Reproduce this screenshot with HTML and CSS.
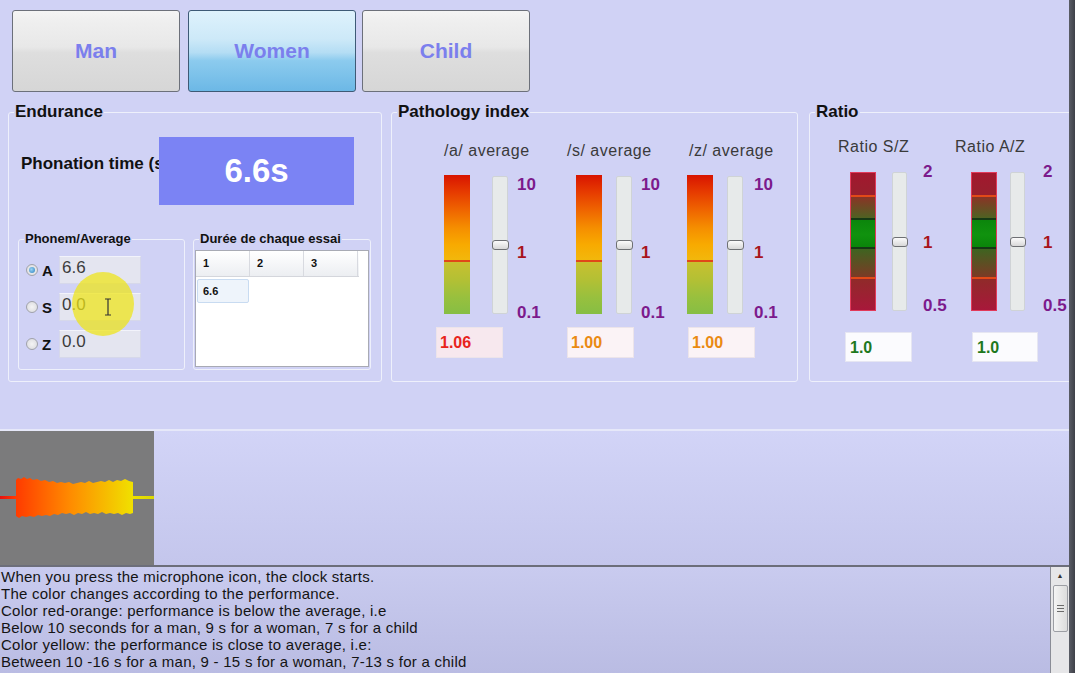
FILE: index.html
```html
<!DOCTYPE html>
<html lang="en">
<head>
<meta charset="utf-8">
<title>Endurance</title>
<link rel="stylesheet" href="styles.css">
</head>
<body>
<div class="window">
  <main class="main">
    <div class="toolbar">
      <button class="tab">Man</button>
      <button class="tab tab--active">Women</button>
      <button class="tab">Child</button>
    </div>

    <div class="groups">
      <fieldset class="group group--endurance">
        <legend>Endurance</legend>
        <div class="phonation">
          <div class="phonation-label">Phonation time (s)</div>
          <div class="phonation-value">6.6s</div>
        </div>
        <div class="subgroups">
          <fieldset class="subgroup subgroup--phonem">
            <legend>Phonem/Average</legend>
            <div class="phonem-row"><span class="radio radio--on"></span><span class="phonem-letter">A</span><span class="phonem-input">6.6</span></div>
            <div class="phonem-row"><span class="radio"></span><span class="phonem-letter">S</span><span class="phonem-input">0.0</span></div>
            <div class="phonem-row"><span class="radio"></span><span class="phonem-letter">Z</span><span class="phonem-input">0.0</span></div>
            <div class="cursor-spot"></div>
            <svg class="ibeam" width="8" height="18" viewBox="0 0 8 18"><path d="M1 1h6M4 1v16M1 17h6" stroke="#333" stroke-width="1.2" fill="none"/></svg>
          </fieldset>
          <fieldset class="subgroup subgroup--trials">
            <legend>Durée de chaque essai</legend>
            <div class="trials-grid">
              <div class="trials-head"><span>1</span><span>2</span><span>3</span></div>
              <div class="trials-row"><span class="trials-cell">6.6</span></div>
            </div>
          </fieldset>
        </div>
      </fieldset>

      <fieldset class="group group--pathology">
        <legend>Pathology index</legend>
        <div class="meters meters--pathology">
          <div class="mcol mcol--pa">
            <div class="mcol-title">/a/ average</div>
            <div class="meter">
              <div class="bar bar--path"></div>
              <div class="track"><span class="thumb"></span></div>
              <div class="scale"><span class="scale-max">10</span><span class="scale-mid">1</span><span class="scale-min">0.1</span></div>
            </div>
            <div class="value value--red">1.06</div>
          </div>
          <div class="mcol mcol--ps">
            <div class="mcol-title">/s/ average</div>
            <div class="meter">
              <div class="bar bar--path"></div>
              <div class="track"><span class="thumb"></span></div>
              <div class="scale"><span class="scale-max">10</span><span class="scale-mid">1</span><span class="scale-min">0.1</span></div>
            </div>
            <div class="value value--orange">1.00</div>
          </div>
          <div class="mcol mcol--pz">
            <div class="mcol-title">/z/ average</div>
            <div class="meter">
              <div class="bar bar--path"></div>
              <div class="track"><span class="thumb"></span></div>
              <div class="scale"><span class="scale-max">10</span><span class="scale-mid">1</span><span class="scale-min">0.1</span></div>
            </div>
            <div class="value value--orange">1.00</div>
          </div>
        </div>
      </fieldset>

      <fieldset class="group group--ratio">
        <legend>Ratio</legend>
        <div class="meters meters--ratio">
          <div class="mcol mcol--rsz">
            <div class="mcol-title">Ratio S/Z</div>
            <div class="meter">
              <div class="bar bar--ratio"></div>
              <div class="track"><span class="thumb"></span></div>
              <div class="scale"><span class="scale-max">2</span><span class="scale-mid">1</span><span class="scale-min">0.5</span></div>
            </div>
            <div class="value value--green">1.0</div>
          </div>
          <div class="mcol mcol--raz">
            <div class="mcol-title">Ratio A/Z</div>
            <div class="meter">
              <div class="bar bar--ratio"></div>
              <div class="track"><span class="thumb"></span></div>
              <div class="scale"><span class="scale-max">2</span><span class="scale-mid">1</span><span class="scale-min">0.5</span></div>
            </div>
            <div class="value value--green">1.0</div>
          </div>
        </div>
      </fieldset>
    </div>

    <div class="wave-row">
      <div class="wave">
        <svg width="154" height="134" viewBox="0 0 154 134">
          <defs>
            <linearGradient id="wg" x1="0" y1="0" x2="1" y2="0">
              <stop offset="0" stop-color="#e81010"/>
              <stop offset="0.1" stop-color="#ff3a00"/>
              <stop offset="0.45" stop-color="#ff8a00"/>
              <stop offset="0.86" stop-color="#f0e000"/>
              <stop offset="1" stop-color="#d8d800"/>
            </linearGradient>
          </defs>
          <path fill="url(#wg)" d="M0 65 L16 65 L16 49 L18 47 L21 48 L24 46 L27 48 L30 47 L33 49 L37 48 L41 50 L45 49 L49 51 L53 50 L57 52 L61 51 L65 52 L69 51 L73 53 L77 52 L81 51 L85 52 L89 50 L93 52 L97 51 L101 50 L105 51 L109 49 L113 51 L117 49 L121 50 L125 48 L129 50 L133 51 L133 65 L154 65 L154 68 L133 68 L133 82 L130 83 L126 82 L122 84 L118 82 L114 83 L110 82 L106 83 L102 81 L98 83 L94 82 L90 83 L86 81 L82 83 L78 82 L74 84 L70 82 L66 83 L62 82 L58 84 L54 83 L50 85 L46 84 L42 85 L38 84 L34 86 L30 85 L26 86 L22 85 L19 87 L16 85 L16 68 L0 68 Z"/>
        </svg>
      </div>
      <div class="wave-rest"></div>
    </div>

    <div class="log">
      <div class="log-text">
        <p>When you press the microphone icon, the clock starts.</p>
        <p>The color changes according to the performance.</p>
        <p>Color red-orange: performance is below the average, i.e</p>
        <p>Below 10 seconds for a man, 9 s for a woman, 7 s for a child</p>
        <p>Color yellow: the performance is close to average, i.e:</p>
        <p>Between 10 -16 s for a man, 9 - 15 s for a woman, 7-13 s for a child</p>
      </div>
      <div class="scrollbar">
        <div class="scroll-up">&#9650;</div>
        <div class="scroll-thumb"><span></span><span></span><span></span></div>
      </div>
    </div>
  </main>
  <div class="edge"></div>
</div>
</body>
</html>
```

FILE: styles.css
```css
* { box-sizing: border-box; }
html, body { margin: 0; padding: 0; }
body {
  width: 1075px;
  height: 673px;
  overflow: hidden;
  background: #d0d2f5;
  font-family: "Liberation Sans", Arial, sans-serif;
  color: #111;
}
.window { display: flex; height: 673px; }
.main { width: 1069px; height: 673px; overflow: hidden; display: flex; flex-direction: column; flex: none; }
.edge { flex: 1; background: linear-gradient(to right, #5a5d66, #3e4048); }

/* toolbar */
.toolbar { display: flex; padding: 10px 0 0 12px; height: 92px; margin-bottom: 11px; flex: none; }
.tab {
  width: 168px; height: 82px; margin-right: 8px; flex: none;
  border: 1px solid #6c707a; border-radius: 3px;
  background: linear-gradient(#f4f4f4 0%, #efefef 12%, #e8e8e8 45%, #dedede 52%, #d6d6d6 100%);
  font: bold 21px "Liberation Sans", Arial, sans-serif;
  color: #7b7fed;
  padding: 0;
}
.tab:nth-child(2) { margin-right: 6px; }
.tab--active {
  border-color: #3e5a76;
  background: linear-gradient(#def2fc 0%, #cde9f8 35%, #b4ddf4 52%, #8ccbee 62%, #6cb8e6 100%);
}

/* groups */
.groups { display: flex; padding-left: 8px; height: 279px; flex: none; }
.group {
  margin: 0; height: 279px; flex: none;
  border: 1px solid #eef0fb; border-radius: 3px;
  padding: 0 0 0 5px;
  min-width: 0;
}
.group legend {
  padding: 0 1px;
  font: bold 17px/18px "Liberation Sans", Arial, sans-serif;
  color: #111;
}
.group--endurance { width: 374px; }
.group--pathology { width: 407px; margin-left: 9px; }
.group--ratio { width: 270px; margin-left: 11px; }

/* endurance */
.phonation { display: flex; align-items: flex-start; margin-top: 16px; }
.phonation-label {
  width: 138px; margin-left: 7px; margin-top: 18px; flex: none;
  white-space: nowrap; overflow: hidden;
  font-weight: bold; font-size: 17px; line-height: 18px;
}
.phonation-value {
  width: 195px; height: 68px; flex: none;
  background: #7b83f4;
  color: #fff; font-weight: bold; font-size: 33px;
  display: flex; align-items: center; justify-content: center;
}
.subgroups { display: flex; margin-top: 26px; margin-left: 4px; }
.subgroup {
  margin: 0; height: 139px; flex: none;
  border: 1px solid #eef0fb; border-radius: 3px;
  padding: 0 0 1px 5px; min-width: 0;
  position: relative;
}
.subgroup legend {
  padding: 0 1px;
  font: bold 13px/16px "Liberation Sans", Arial, sans-serif;
  color: #111;
}
.subgroup--phonem { width: 167px; }
.subgroup--trials { width: 178px; margin-left: 8px; }

.phonem-row { display: flex; align-items: center; height: 28px; margin-top: 9px; }
.radio {
  width: 12px; height: 12px; margin-left: 2px; margin-right: 4px; flex: none;
  border-radius: 50%;
  border: 1px solid #a0a2aa;
  background: radial-gradient(circle, #f4f4f4 0%, #d8d8dc 100%);
  position: relative;
}
.radio--on::after {
  content: ""; position: absolute; left: 2px; top: 2px; width: 6px; height: 6px; border-radius: 50%;
  background: radial-gradient(circle at 40% 40%, #9ad4f4, #2a7fc0);
}
.phonem-letter { width: 17px; font-weight: bold; font-size: 15px; flex: none; }
.phonem-input {
  width: 82px; height: 28px; flex: none;
  background: #e4e5f0; border: 1px solid #d6d8ea; border-top-color: #f2f3fb;
  font-size: 17px; line-height: 22px; color: #3c3c3c; padding-left: 2px;
}
.cursor-spot {
  position: absolute; left: 53px; top: 25px;
  width: 62px; height: 64px; border-radius: 50%;
  background: rgba(238, 228, 20, 0.72);
}
.ibeam { position: absolute; left: 85px; top: 51px; }

.trials-grid {
  margin: 3px 0 0 -4px; width: 174px; height: 117px;
  background: #fff; border: 1px solid #a8aab4;
}
.trials-head { display: flex; height: 26px; border-bottom: 1px solid #d4d6dc; background: linear-gradient(#ffffff, #eceef2); width: 163px; }
.trials-head span {
  width: 54px; border-right: 1px solid #d8dae0;
  font: bold 11px/25px "Liberation Sans", Arial, sans-serif; padding-left: 7px;
}
.trials-row { padding: 2px 0 0 1px; }
.trials-cell {
  display: block; width: 52px; height: 24px;
  background: #eef4fb; border: 1px solid #c8dbf1; border-radius: 2px;
  font: bold 11px/22px "Liberation Sans", Arial, sans-serif; padding-left: 5px;
}

/* meters */
.meters { display: flex; }
.meters--pathology { padding-left: 39px; }
.meters--ratio { padding-left: 23px; }
.mcol { display: flex; flex-direction: column; align-items: flex-start; flex: none; }
.mcol-title {
  font-size: 16px; line-height: 20px; color: #3a3a3a; letter-spacing: 0.5px; white-space: nowrap;
  margin-left: var(--tx);
}
.meter { display: flex; align-items: flex-start; height: 139px; }
.bar { width: 26px; height: 139px; margin-left: var(--bx); flex: none; }
.bar--path {
  background: linear-gradient(#d81400 0%, #e63a00 12%, #ef6400 25%, #f58e00 38%, #f8aa00 50%, #f2b80c 61.5%, #e04818 61.5%, #e04818 62.5%, #c8c030 62.5%, #b4c034 75%, #98c03e 88%, #86be44 100%);
}
.bar--ratio {
  border: 1px solid #e23a5a;
  background: linear-gradient(#a2182e 0%, #98202e 16%, #e24a18 16%, #e24a18 17.5%, #8a3426 17.5%, #4e6222 33%, #153a15 33%, #153a15 34.5%, #0c860c 34.5%, #10920e 45%, #0a860a 54%, #153a15 54%, #153a15 55.5%, #3e6420 55.5%, #7c3a26 76%, #e24a18 76%, #e24a18 77.5%, #902a2a 77.5%, #a8183a 100%);
}
.track {
  position: relative; flex: none;
  width: 16px; height: 138px; margin-top: 1px; margin-left: var(--sx);
  background: #e7eaea; border: 1px solid #cfd3d6; border-radius: 2px;
}
.thumb {
  position: absolute; left: -1px; top: 63px; width: 17px; height: 10px;
  border: 1px solid #6e7074; border-radius: 3px;
  background: linear-gradient(#fbfbfb, #d8d8d8);
}
.scale {
  display: flex; flex-direction: column; justify-content: space-between; align-items: flex-start;
  height: 146px; margin-left: var(--lx); margin-top: 1px; flex: none;
  font-weight: bold; font-size: 17px; line-height: 18px;
}
.scale-max, .scale-min { color: #7c1a8c; }
.scale-mid { color: #a8141c; margin-top: 8px; }
.value {
  margin-top: 13px; margin-left: var(--vx);
  width: 67px; height: 31px;
  background: #fbf3f6; border: 1px solid #ece4ea;
  font-weight: bold; font-size: 16px; line-height: 29px; padding-left: 3px;
}
.value--red { color: #e8241c; background: #f7e8ee; }
.value--orange { color: #ea8a12; }
.value--green { color: #1e781e; background: #fbfbfe; border-color: #e6e6f2; height: 30px; margin-top: 21px; padding-left: 4px; }

.mcol--pa { width: 131px; --tx: 8px; --bx: 8px; --sx: 22px; --lx: 9px; --vx: 0px; }
.mcol--ps { width: 121px; --tx: 0px; --bx: 9px; --sx: 14px; --lx: 9px; --vx: 0px; }
.mcol--pz { width: 120px; --tx: 1px; --bx: -1px; --sx: 14px; --lx: 11px; --vx: 0px; }
.meters--pathology .mcol-title { margin-top: 20px; }
.meters--pathology .meter { margin-top: 14px; }

.meters--ratio .mcol-title { margin-top: 16px; }
.meters--ratio .meter { margin-top: 15px; }
.meters--ratio .track { width: 15px; height: 139px; margin-top: 0; }
.meters--ratio .thumb { top: 64px; width: 16px; }
.meters--ratio .scale { margin-top: -9px; height: 152px; }
.mcol--rsz { width: 117px; --tx: 0px; --bx: 12px; --sx: 16px; --lx: 16px; --vx: 7px; }
.mcol--raz { width: 140px; --tx: 0px; --bx: 16px; --sx: 13px; --lx: 18px; --vx: 17px; }
.mcol--raz .value { width: 66px; }

/* wave */
.wave-row {
  display: flex; height: 136px; margin-top: 47px; flex: none;
  border-top: 2px solid #e6e8f9;
}
.wave { width: 154px; height: 134px; background: #7b7b7c; flex: none; }
.wave svg { display: block; }
.wave-rest { flex: 1; background: linear-gradient(#d2d4f7, #c4c6ec); }

/* log */
.log {
  display: flex; flex: 1;
  border-top: 2px solid #6c6e7a;
}
.log-text {
  flex: 1; padding: 1px 0 0 1px;
  background: linear-gradient(#c9cbef, #babce3);
  border-right: 1px solid #8a8c96;
  font-size: 15px; line-height: 17px; color: #141414;
  letter-spacing: 0.25px;
}
.log-text p { margin: 0; white-space: nowrap; }
.scrollbar { width: 18px; background: #e6e6e8; display: flex; flex-direction: column; align-items: center; flex: none; }
.scroll-up { height: 17px; font-size: 7px; line-height: 17px; color: #333; }
.scroll-thumb {
  width: 15px; height: 47px; margin-top: 1px;
  border: 1px solid #9c9ea4; border-radius: 2px;
  background: linear-gradient(to right, #f4f4f4, #dcdcdc);
  display: flex; flex-direction: column; align-items: center; justify-content: center; gap: 2px;
}
.scroll-thumb span { width: 7px; height: 1px; background: #6a6a6a; }
```
